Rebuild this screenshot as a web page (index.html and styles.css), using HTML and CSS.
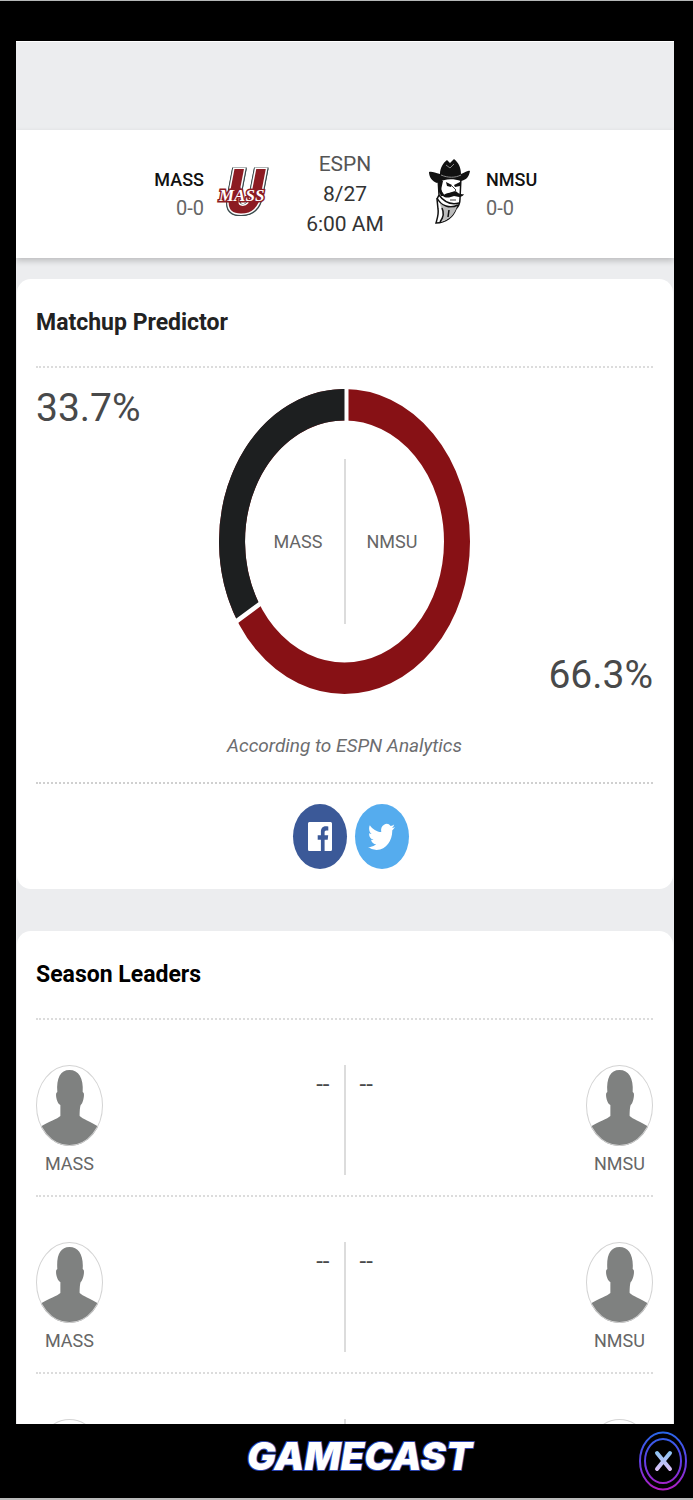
FILE: index.html
```html
<!DOCTYPE html>
<html lang="en">
<head>
    <meta charset="UTF-8">
    <meta name="viewport" content="width=device-width, initial-scale=1.0">
    <title>Gamecast</title>
    <link rel="stylesheet" href="styles.css">
</head>
<body>
    <svg class="sprite" aria-hidden="true">
        <symbol id="player" viewBox="0 0 66 81" preserveAspectRatio="none">
            <clipPath id="face"><ellipse cx="33" cy="40.500" rx="33" ry="40.500"/></clipPath>
            <path clip-path="url(#face)" fill="#7f8180" d="M33 5C42 5 47 13 46 27L47 28C48 31 46 39 44 40C43 43 43 49 43 51C46 54 53 56 62 62V81H4V62C13 56 21 54 24 51V40C21 39 19 31 20 28L21 27C20 13 24 5 33 5Z"/>
            <ellipse cx="33" cy="40.500" rx="32.500" ry="40" fill="none" stroke="#d4d4d4"/>
        </symbol>
    </svg>

    <main class="app">
        <div class="ad-space"></div>

        <header class="scoreboard">
            <div class="team team-away">
                <div class="team-text">
                    <div class="team-name">MASS</div>
                    <div class="record">0-0</div>
                </div>
                <svg class="team-logo" viewBox="0 0 48 66" aria-hidden="true">
                    <text class="logo-u" x="27" y="52" text-anchor="middle">U</text>
                    <text class="logo-word" x="1" y="40">MASS</text>
                </svg>
            </div>
            <div class="game-info">
                <div class="network">ESPN</div>
                <div>8/27</div>
                <div>6:00 AM</div>
            </div>
            <div class="team">
                <svg class="team-logo" viewBox="0 0 48 66" aria-hidden="true">
                    <path fill="#fff" stroke="#111" stroke-width="1.500" d="M14 16L15 34L13 38L14 48C15 53 13 58 12 62C22 62 29 56 32 48C35 45 36 43 36 38L37 16Z"/>
                    <path fill="#bbb" d="M16 42C20 46 27 48 33 45C31 53 25 59 18 60C21 55 17 49 16 42Z"/>
                    <path fill="none" stroke="#111" stroke-width="1.500" d="M13 37C17 45 26 48 34 44M15 34C20 41 27 44 35 42M18 47C21 53 19 57 16 61M25 49L24 56M15 22L18 34"/>
                    <path fill="#111" d="M5 11C8 10 11 12 16 13C16 7 19 2 23 -1L26 2L30 -2C34 1 37 6 37 13C41 12 43 9 46 10C45 16 42 19 37 20C28 17 20 18 13 22C8 20 5 16 5 11Z"/>
                    <path fill="none" stroke="#888" d="M17 14C24 17 31 17 37 14M22 4L26 7L30 3"/>
                    <path fill="#111" d="M14 20H19L17 29L21 35L17 35L14 29ZM22 21L28 24L27 26L23 25ZM30 24L36 21V25L31 26ZM19 35C21 32 25 32 28 31L31 30C34 31 35 34 40 33C38 37 34 36 30 35C27 36 22 38 19 35Z"/>
                    <path stroke="#444" fill="none" d="M28 25L32 29L30 31M26 39H32"/>
                </svg>
                <div class="team-text">
                    <div class="team-name">NMSU</div>
                    <div class="record">0-0</div>
                </div>
            </div>
        </header>

        <section class="card">
            <h2 class="card-title">Matchup Predictor</h2>
            <div class="predictor">
                <div class="percent">33.7%</div>
                <div class="donut">
                    <svg class="donut-ring" viewBox="0 0 251 251" preserveAspectRatio="none" aria-hidden="true">
                        <circle cx="125.500" cy="125.500" r="112.500" fill="none" stroke="#871115" stroke-width="26"/>
                        <path d="M127 13A112.500 112.500 0 0 0 29.400 183.900" fill="none" stroke="#1d1f20" stroke-width="26"/>
                        <path d="M127.500 -2V29M43.500 175.300L16 192" stroke="#fff" stroke-width="4"/>
                    </svg>
                    <div class="donut-labels">
                        <span class="donut-away">MASS</span>
                        <span class="donut-home">NMSU</span>
                    </div>
                </div>
                <div class="percent percent-home">66.3%</div>
            </div>
            <p class="source">According to ESPN Analytics</p>
            <div class="share">
                <a class="share-link facebook" href="#" aria-label="Share on Facebook">
                    <svg width="24" height="29" viewBox="0 0 24 24" preserveAspectRatio="none">
                        <path fill="#fff" d="M1.300 0H22.700Q24 0 24 1.300V22.700Q24 24 22.700 24H16.600V14.700H19.700L20.200 11H16.600V8.700C16.600 7.600 17 7 18.400 7H20.300V3.800C19.900 3.700 18.900 3.600 17.600 3.600C14.800 3.600 12.900 5.300 12.900 8.300V11H9.700V14.700H12.900V24H1.300Q0 24 0 22.700V1.300Q0 0 1.300 0Z"/>
                    </svg>
                </a>
                <a class="share-link twitter" href="#" aria-label="Share on Twitter">
                    <svg width="27" height="32" viewBox="0 0 24 24" preserveAspectRatio="none">
                        <path fill="#fff" d="M23.950 4.570a10 10 0 0 1-2.820.770 4.960 4.960 0 0 0 2.160-2.720c-.950.550-2 .950-3.130 1.180a4.920 4.920 0 0 0-8.380 4.480C7.690 8.100 4.070 6.130 1.640 3.160a4.820 4.820 0 0 0-.660 2.480c0 1.710.870 3.210 2.190 4.100a4.900 4.900 0 0 1-2.230-.620v.060a4.920 4.920 0 0 0 3.950 4.830 5 5 0 0 1-2.210.080 4.940 4.940 0 0 0 4.600 3.420A9.870 9.870 0 0 1 0 19.540a13.990 13.990 0 0 0 7.550 2.210c9.050 0 14-7.500 14-13.980 0-.210 0-.420-.020-.630a9.940 9.940 0 0 0 2.460-2.550z"/>
                    </svg>
                </a>
            </div>
        </section>

        <section class="card">
            <h2 class="card-title season-title">Season Leaders</h2>
            <div class="leader">
                <div class="player"><svg class="avatar"><use href="#player"/></svg>MASS</div>
                <div class="stat stat-away">--</div>
                <div class="stat">--</div>
                <div class="player"><svg class="avatar"><use href="#player"/></svg>NMSU</div>
            </div>
            <div class="leader">
                <div class="player"><svg class="avatar"><use href="#player"/></svg>MASS</div>
                <div class="stat stat-away">--</div>
                <div class="stat">--</div>
                <div class="player"><svg class="avatar"><use href="#player"/></svg>NMSU</div>
            </div>
            <div class="leader">
                <div class="player"><svg class="avatar"><use href="#player"/></svg></div>
                <div class="stat stat-away"></div>
                <div class="stat"></div>
                <div class="player"><svg class="avatar"><use href="#player"/></svg></div>
            </div>
        </section>
    </main>

    <footer class="bottom-bar">
        <h1 class="brand">GAMECAST</h1>
        <button class="close" type="button" aria-label="Close">
            <svg width="48" height="60" viewBox="0 0 48 60" aria-hidden="true">
                <defs>
                    <linearGradient id="neon" x1="0" y1="0" x2="0" y2="60" gradientUnits="userSpaceOnUse">
                        <stop offset="0" stop-color="#2668e8"/>
                        <stop offset=".5" stop-color="#6040e8"/>
                        <stop offset="1" stop-color="#b41cc0"/>
                    </linearGradient>
                    <linearGradient id="cross" x1="0" y1="21" x2="0" y2="39" gradientUnits="userSpaceOnUse">
                        <stop offset="0" stop-color="#8cc4f4"/>
                        <stop offset="1" stop-color="#dcc0f8"/>
                    </linearGradient>
                </defs>
                <ellipse cx="24" cy="30" rx="23" ry="28.500" fill="none" stroke="url(#neon)" stroke-width="2"/>
                <ellipse cx="24" cy="30" rx="18" ry="22" fill="none" stroke="url(#neon)" stroke-width="2"/>
                <path d="M18 22L31 38M31 22L18 38" stroke="url(#cross)" stroke-width="4" stroke-linecap="round"/>
            </svg>
        </button>
    </footer>
</body>
</html>
```
FILE: styles.css
```css
* {
    box-sizing: border-box;
}
body {
    display: flex;
    flex-direction: column;
    height: 100vh;
    margin: 0;
    border-top: 1px solid #b5b8b8;
    border-bottom: 2px solid #b9b9b9;
    background-color: #000;
    color: #48494a;
    font-family: Roboto, sans-serif;
    font-size: 18px;
}
.sprite {
    position: absolute;
    width: 0;
    height: 0;
}
.app {
    flex: 1 1 0;
    min-height: 0;
    margin: 40px 19px 0 16px;
    overflow: hidden;
    background-color: #ecedef;
}
.ad-space {
    height: 89px;
    border-top: 1px solid #fff;
}

/* score header */
.scoreboard {
    display: grid;
    grid-template-columns: 1fr 78px 1fr;
    column-gap: 40px;
    align-items: center;
    height: 128px;
    margin-bottom: 21px;
    background-color: #fff;
    box-shadow: 0 3px 6px rgba(0, 0, 0, 0.2);
}
.team {
    display: flex;
    align-items: center;
    gap: 14px;
    line-height: 28px;
}
.team-away {
    justify-content: flex-end;
    text-align: right;
}
.team-name {
    color: #111;
    font-weight: 500;
}
.record {
    font-size: 20px;
    color: #666;
}
.team-logo {
    width: 48px;
    height: 66px;
    overflow: visible;
}
.logo-u {
    fill: #8c1b22;
    stroke: #fff;
    stroke-width: 3px;
    paint-order: stroke;
    font-family: "Liberation Mono", monospace;
    font-size: 66px;
    font-weight: bold;
    font-style: italic;
    filter: drop-shadow(1px 0 0 #3a4a4c) drop-shadow(-1px 0 0 #3a4a4c) drop-shadow(0 1px 0 #3a4a4c);
}
.logo-word {
    fill: #fff;
    stroke: #8c1b22;
    stroke-width: 3px;
    paint-order: stroke;
    font-family: "Liberation Serif", serif;
    font-size: 17px;
    font-weight: bold;
    font-style: italic;
}
.game-info {
    text-align: center;
    white-space: nowrap;
    font-size: 21px;
    line-height: 30px;
    color: #333;
}
.network {
    color: #555;
}

/* cards */
.card {
    margin: 0 1px 42px;
    padding: 0 20px 0 19px;
    border-radius: 14px;
    background-color: #fff;
}
.card-title {
    margin: 0;
    border-bottom: 2px dotted #dcdcdc;
    font-size: 23px;
    line-height: 87px;
    color: #222;
}
.season-title {
    color: #000;
}
.predictor {
    display: grid;
    grid-template-columns: 1fr 251px 1fr;
    padding-top: 21px;
}
.percent {
    font-size: 39px;
    line-height: 38px;
}
.percent-home {
    align-self: end;
    text-align: right;
}
.donut {
    position: relative;
    height: 305px;
}
.donut-ring {
    display: block;
    width: 100%;
    height: 100%;
}
.donut-labels {
    position: absolute;
    top: 70px;
    left: 0;
    right: 0;
    display: flex;
    line-height: 165px;
    color: #666;
}
.donut-labels span {
    flex: 1;
    padding: 0 21px;
}
.donut-away {
    border-right: 2px solid #dcdcdc;
    text-align: right;
}
.source {
    margin: 40px 0 24px;
    text-align: center;
    font-size: 19px;
    font-style: italic;
    line-height: 24px;
    color: #6c6d6f;
}
.share {
    display: flex;
    justify-content: center;
    gap: 8px;
    padding: 20px 0 20px 12px;
    border-top: 2px dotted #d0d0d0;
}
.share-link {
    display: flex;
    align-items: center;
    justify-content: center;
    width: 54px;
    height: 65px;
    border-radius: 50%;
}
.facebook {
    background-color: #3b5998;
}
.twitter {
    background-color: #55acee;
}

/* season leaders */
.leader {
    display: flex;
    padding: 45px 0 19px;
    border-bottom: 2px dotted #dcdcdc;
}
.player {
    width: 67px;
    text-align: center;
    line-height: 24px;
    color: #666;
}
.avatar {
    display: block;
    width: 67px;
    height: 81px;
    margin-bottom: 6px;
}
.stat {
    flex: 1;
    height: 110px;
    padding: 0 14px;
    font-size: 24px;
    line-height: 38px;
}
.stat-away {
    border-right: 2px solid #dcdcdc;
    text-align: right;
}

/* bottom bar */
.bottom-bar {
    display: grid;
    grid-template-columns: 1fr auto 1fr;
    align-items: center;
    height: 74px;
    padding: 0 6px 0 32px;
}
.brand {
    grid-column: 2;
    margin: 0 0 10px;
    color: #fff;
    font-family: Inter, sans-serif;
    font-size: 38px;
    font-style: italic;
    font-weight: 900;
    line-height: 40px;
    -webkit-text-stroke: 2px #2c44b0;
    paint-order: stroke fill;
}
.close {
    justify-self: end;
    padding: 0;
    border: 0;
    background: none;
    cursor: pointer;
}
.close svg {
    display: block;
}
```
